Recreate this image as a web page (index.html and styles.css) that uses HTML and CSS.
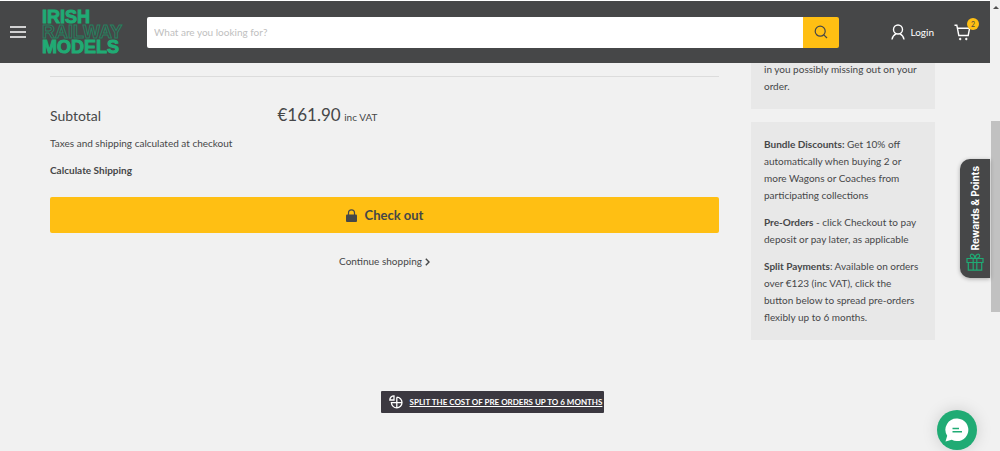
FILE: index.html
```html
<!DOCTYPE html>
<html lang="en">
<head>
    <meta charset="UTF-8">
    <meta name="viewport" content="width=device-width, initial-scale=1.0">
    <title>Your cart - Irish Railway Models</title>
    <link rel="stylesheet" href="styles.css">
</head>
<body>
    <div class="page">
        <header class="header">
            <button class="menu-toggle" type="button" aria-label="Menu">
                <svg width="16" height="12" viewBox="0 0 16 12"><path d="M0 1h16M0 6h16M0 11h16" stroke="currentColor" stroke-width="1.4"/></svg>
            </button>
            <a class="logo" href="#">
                <span>IRISH</span>
                <span class="logo-outline">RAILWAY</span>
                <span>MODELS</span>
            </a>
            <form class="search">
                <input type="text" placeholder="What are you looking for?" aria-label="Search">
                <button type="button" aria-label="Search">
                    <svg width="14" height="14" viewBox="0 0 14 14" fill="none" stroke="currentColor" stroke-width="1.2"><circle cx="6.2" cy="6.2" r="5"/><path d="M9.8 9.8L13 13"/></svg>
                </button>
            </form>
            <a class="login" href="#">
                <svg width="14" height="16" viewBox="0 0 14 16" fill="none" stroke="currentColor" stroke-width="1.4"><circle cx="7" cy="5.5" r="4.5"/><path d="M1 15.5c.4-2.6 1.8-4.6 4-5.6M13 15.5c-.4-2.6-1.8-4.6-4-5.6"/></svg>
                <span>Login</span>
            </a>
            <a class="cart" href="#" aria-label="Cart">
                <svg width="17" height="17" viewBox="0 0 17 17" fill="none" stroke="currentColor" stroke-width="1.4"><path d="M.5 1.2h2.3l2 10.3h9.4l1.4-7.3H3.500"/><circle cx="6.2" cy="15" r=".9" fill="currentColor" stroke-width=".6"/><circle cx="12.3" cy="15" r=".9" fill="currentColor" stroke-width=".6"/></svg>
                <span class="cart-count">2</span>
            </a>
        </header>

        <main class="content">
            <section class="summary">
                <div class="subtotal">
                    <h2>Subtotal</h2>
                    <p><span class="price">€161.90</span> inc VAT</p>
                </div>
                <p class="taxes">Taxes and shipping calculated at checkout</p>
                <a class="shipping" href="#">Calculate Shipping</a>
                <button class="checkout" type="button">
                    <svg width="11" height="13" viewBox="0 0 11 13"><path d="M2.5 6V3.8a3 3 0 0 1 6 0V6" fill="none" stroke="currentColor" stroke-width="1.2"/><rect y="5.5" width="11" height="7.5" rx="1" fill="currentColor"/></svg>
                    Check out
                </button>
                <a class="continue" href="#">
                    Continue shopping
                    <svg width="5" height="8" viewBox="0 0 5 8"><path d="M.8.8L4 4L.8 7.2" fill="none" stroke="currentColor" stroke-width="1.4"/></svg>
                </a>
            </section>

            <aside class="notes">
                <div class="note">
                    <p>in you possibly missing out on your order.</p>
                </div>
                <div class="note">
                    <p><strong>Bundle Discounts:</strong> Get 10% off automatically when buying 2 or more Wagons or Coaches from participating collections</p>
                    <p><strong>Pre-Orders</strong> - click Checkout to pay deposit or pay later, as applicable</p>
                    <p><strong>Split Payments</strong>: Available on orders over €123 (inc VAT), click the button below to spread pre-orders flexibly up to 6 months.</p>
                </div>
            </aside>
        </main>

        <footer class="footer">
            <a class="split-cost" href="#">
                <svg width="14" height="14" viewBox="0 0 14 14" fill="none" stroke="currentColor" stroke-width="1.3"><path d="M5 5H.8A4.2 4.2 0 0 1 5 .8zM7.8 2.2A5.3 5.3 0 1 1 2.4 7.7H13M7.8 2.2V13"/></svg>
                <span>SPLIT THE COST OF PRE ORDERS UP TO 6 MONTHS</span>
            </a>
        </footer>

        <button class="rewards" type="button">
            <svg width="18" height="18" viewBox="0 0 18 18" fill="none" stroke="currentColor" stroke-width="1.2"><path d="M1 5.5h16v4H1zM2.3 9.5v7.6h13.4V9.5M7.2 5.5v11.6M10.8 5.5v11.6M9 5.4C6 5.4 4.3 4.5 4.3 2.8C4.3.4 8.4.3 9 5.4C9.6.3 13.7.4 13.7 2.8C13.7 4.5 12 5.4 9 5.4"/></svg>
            <span>Rewards &amp; Points</span>
        </button>

        <button class="chat" type="button" aria-label="Chat">
            <svg width="24" height="24" viewBox="0 0 24 24"><path d="M12.5.5a11.3 11.3 0 1 1-5.7 21.3L.5 23.5l1.7-5.7A11.3 11.3 0 0 1 12.500.5z" fill="#fff"/><path d="M7.5 10.5h6.5M7.5 13.8h9.5" stroke="#20ab74" stroke-width="1.6"/></svg>
        </button>
    </div>
    <div class="scrollbar">
        <div class="scroll-arrow"></div>
        <div class="scroll-thumb"></div>
    </div>
</body>
</html>
```
FILE: styles.css
```css
:root {
    --bg-color: #f1f1f1;
    --dark-color: #464748;
    --text-color: #464748;
    --accent-color: #ffbf13;
    --green-color: #20ab74;
}

* {
    margin: 0;
    padding: 0;
    box-sizing: border-box;
}

body {
    display: flex;
    height: 100vh;
    overflow: hidden;
    font-family: Lato, "Liberation Sans", sans-serif;
    font-size: 10px;
    line-height: 17px;
    color: var(--text-color);
    background-color: var(--bg-color);
}

a {
    color: inherit;
    text-decoration: none;
}

button {
    border: none;
    font: inherit;
    color: inherit;
    cursor: pointer;
}

svg {
    display: block;
    flex: none;
}

.page {
    position: relative;
    flex: 1;
    min-width: 0;
}

.header {
    position: relative;
    z-index: 10;
    display: flex;
    align-items: center;
    height: 63px;
    padding: 0 19px 0 10px;
    background-color: var(--dark-color);
    border-top: 1px solid #fff;
    color: #fff;
}

.menu-toggle {
    background: none;
    margin-right: 16px;
}

.logo {
    display: flex;
    flex-direction: column;
    width: 89px;
    margin-right: 16px;
    font-family: "Liberation Sans", sans-serif;
    font-size: 18px;
    font-weight: 700;
    line-height: 15px;
    color: var(--green-color);
    -webkit-text-stroke: 1px var(--green-color);
}

.logo-outline {
    color: transparent;
    -webkit-text-stroke: 1px #27805f;
}

.search {
    display: flex;
    flex: 1;
    height: 31px;
    margin-right: 52px;
    border-radius: 2px;
    overflow: hidden;
}

.search input {
    flex: 1;
    min-width: 0;
    padding: 0 7px;
    border: none;
    font: inherit;
}

.search input::placeholder {
    color: #c0c0c0;
}

.search button {
    display: flex;
    align-items: center;
    justify-content: center;
    width: 36px;
    background-color: var(--accent-color);
    color: var(--text-color);
}

.login {
    display: flex;
    align-items: center;
    gap: 5px;
    margin-right: 20px;
}

.cart {
    position: relative;
}

.cart-count {
    position: absolute;
    top: -6px;
    right: -8px;
    width: 12px;
    height: 12px;
    border-radius: 50%;
    background-color: var(--accent-color);
    color: var(--text-color);
    font-size: 7px;
    line-height: 12px;
    text-align: center;
}

.content {
    display: flex;
    gap: 32px;
    padding: 0 55px 0 50px;
}

.summary {
    display: flex;
    flex-direction: column;
    flex: 1;
    padding-top: 13px;
}

.subtotal {
    display: flex;
    align-items: baseline;
    padding-top: 26px;
    border-top: 1px solid #dcdcdc;
}

.subtotal h2 {
    width: 34%;
    font-size: 14px;
    font-weight: 400;
}

.price {
    margin-right: 1px;
    font-size: 17px;
    line-height: 24px;
}

.taxes {
    margin: 8px 0 10px;
}

.shipping {
    font-weight: 700;
}

.checkout {
    display: flex;
    align-items: center;
    justify-content: center;
    gap: 8px;
    height: 36px;
    margin: 18px 0 20px;
    border-radius: 2px;
    background-color: var(--accent-color);
    font-size: 13px;
    font-weight: 700;
}

.continue {
    display: flex;
    align-items: center;
    justify-content: center;
    gap: 3px;
}

.notes {
    width: 184px;
    margin-top: -16px;
}

.note {
    margin-bottom: 13px;
    padding: 14px 13px;
    background-color: #e8e8e8;
}

.note p + p {
    margin-top: 10px;
}

.footer {
    display: flex;
    justify-content: center;
    padding: 38px 55px 0 50px;
}

.split-cost {
    display: flex;
    align-items: center;
    gap: 7px;
    min-width: 219px;
    height: 22px;
    padding: 0 2px 0 8px;
    border-radius: 1px;
    background-color: #3b3840;
    color: #fff;
    font-size: 8px;
    font-weight: 700;
    text-decoration: underline;
}

.rewards {
    position: absolute;
    top: 159px;
    right: 0;
    display: flex;
    flex-direction: column-reverse;
    align-items: center;
    justify-content: space-between;
    width: 30px;
    height: 119px;
    padding: 7px 6px;
    border-radius: 10px 0 0 10px;
    background-color: var(--dark-color);
    box-shadow: 0 1px 4px rgba(0, 0, 0, 0.3);
    color: var(--green-color);
}

.rewards span {
    writing-mode: vertical-rl;
    transform: rotate(180deg);
    font-family: Inter, sans-serif;
    font-size: 10px;
    font-weight: 700;
    color: #fff;
}

.chat {
    position: absolute;
    right: 13px;
    bottom: 1px;
    display: flex;
    align-items: center;
    justify-content: center;
    width: 40px;
    height: 40px;
    border-radius: 50%;
    background-color: var(--green-color);
    box-shadow: 0 0 16px rgba(0, 0, 0, 0.15);
}

.scrollbar {
    width: 10px;
    padding-left: 1px;
    background-color: #f1f1f1;
}

.scroll-arrow {
    width: 0;
    margin: 6px auto 0;
    border: 3px solid transparent;
    border-top: none;
    border-bottom-color: #505050;
}

.scroll-thumb {
    height: 191px;
    margin-top: 112px;
    background-color: #c1c1c1;
}
```
